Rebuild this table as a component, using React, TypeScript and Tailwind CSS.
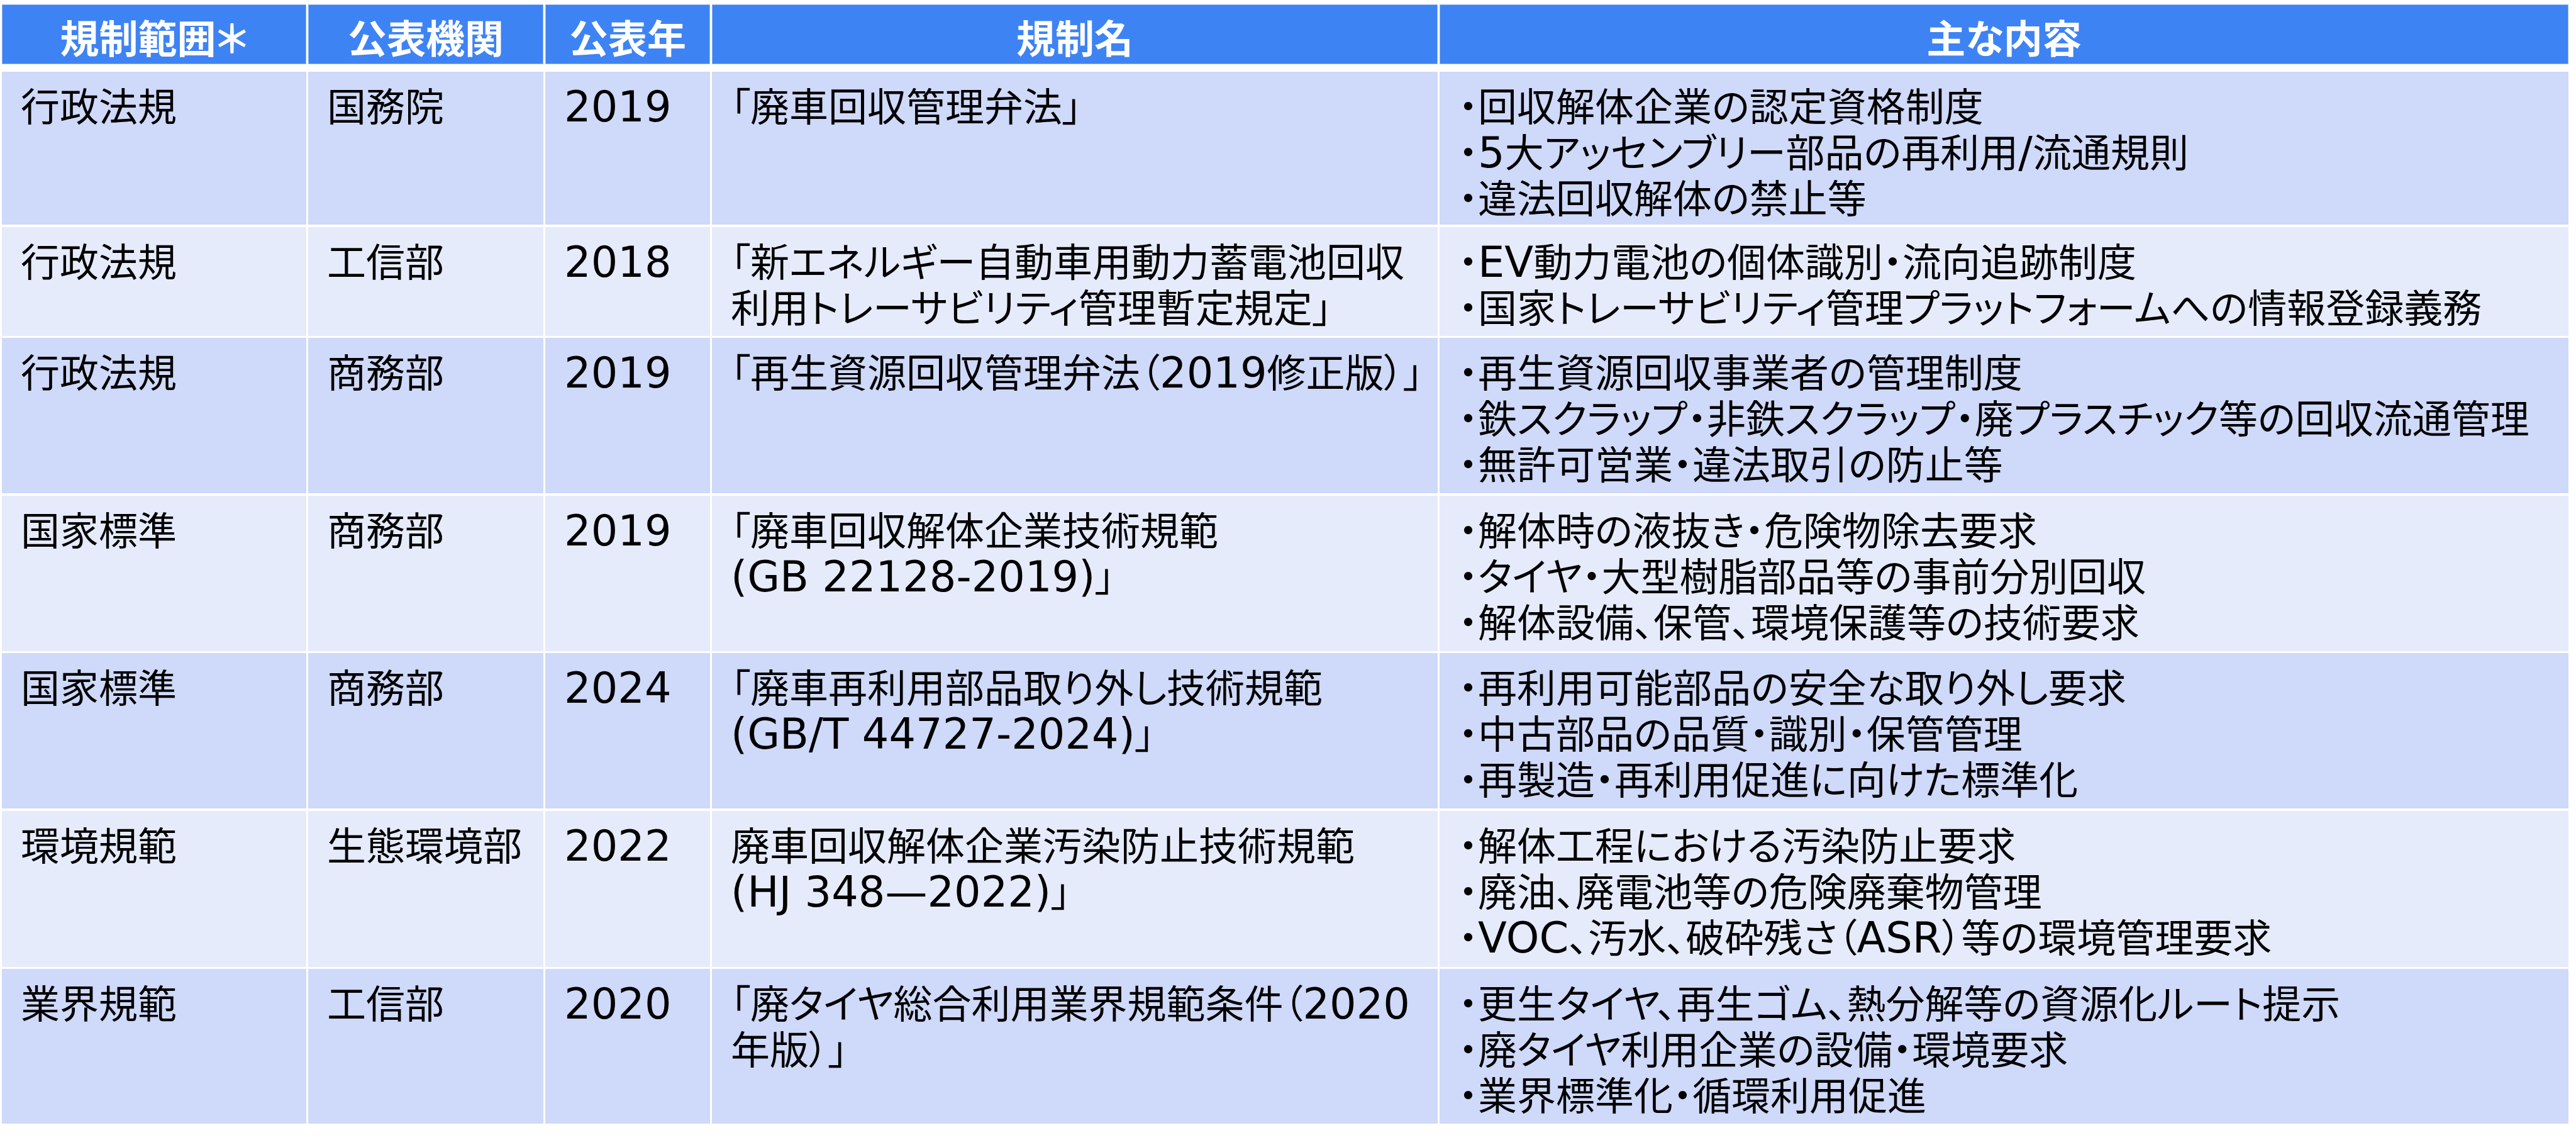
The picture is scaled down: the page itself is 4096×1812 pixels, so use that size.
const rows = [
  {
    scope: "行政法規",
    agency: "国務院",
    year: "2019",
    name: ["「廃車回収管理弁法」"],
    items: ["・回収解体企業の認定資格制度", "・5大アッセンブリー部品の再利用/流通規則", "・違法回収解体の禁止等"],
    h: "h-[243px]",
  },
  {
    scope: "行政法規",
    agency: "工信部",
    year: "2018",
    name: ["「新エネルギー自動車用動力蓄電池回収", "利用トレーサビリティ管理暫定規定」"],
    items: ["・EV動力電池の個体識別・流向追跡制度", "・国家トレーサビリティ管理プラットフォームへの情報登録義務"],
    h: "h-[173px]",
  },
  {
    scope: "行政法規",
    agency: "商務部",
    year: "2019",
    name: ["「再生資源回収管理弁法（2019修正版）」"],
    items: ["・再生資源回収事業者の管理制度", "・鉄スクラップ・非鉄スクラップ・廃プラスチック等の回収流通管理", "・無許可営業・違法取引の防止等"],
    h: "h-[247px]",
  },
  {
    scope: "国家標準",
    agency: "商務部",
    year: "2019",
    name: ["「廃車回収解体企業技術規範", "(GB 22128-2019)」"],
    items: ["・解体時の液抜き・危険物除去要求", "・タイヤ・大型樹脂部品等の事前分別回収", "・解体設備、保管、環境保護等の技術要求"],
    h: "h-[247px]",
  },
  {
    scope: "国家標準",
    agency: "商務部",
    year: "2024",
    name: ["「廃車再利用部品取り外し技術規範", "(GB/T 44727-2024)」"],
    items: ["・再利用可能部品の安全な取り外し要求", "・中古部品の品質・識別・保管管理", "・再製造・再利用促進に向けた標準化"],
    h: "h-[247px]",
  },
  {
    scope: "環境規範",
    agency: "生態環境部",
    year: "2022",
    name: ["廃車回収解体企業汚染防止技術規範", "(HJ 348—2022)」"],
    items: ["・解体工程における汚染防止要求", "・廃油、廃電池等の危険廃棄物管理", "・VOC、汚水、破砕残さ（ASR）等の環境管理要求"],
    h: "h-[248px]",
  },
  {
    scope: "業界規範",
    agency: "工信部",
    year: "2020",
    name: ["「廃タイヤ総合利用業界規範条件（2020", "年版）」"],
    items: ["・更生タイヤ、再生ゴム、熱分解等の資源化ルート提示", "・廃タイヤ利用企業の設備・環境要求", "・業界標準化・循環利用促進"],
    h: "h-[246px]",
  },
];

const cols = "grid grid-cols-[484px_374px_262px_1154px_1795px] gap-x-[3px]";
const headers = ["規制範囲＊", "公表機関", "公表年", "規制名", "主な内容"];

// latin runs (numbers, codes) are set a bit larger/wider than the kanji, like the slide
function Txt({ s }: { s: string }) {
  const parts = s.split(/([\x20-\x7E—]+)/);
  return (
    <>
      {parts.map((p, i) =>
        i % 2 === 1 ? (
          <span key={i} className="font-['DejaVu_Sans',sans-serif] text-[67px] leading-[50px]">
            {p}
          </span>
        ) : (
          <span key={i}>{p}</span>
        )
      )}
    </>
  );
}

export default function App() {
  return (
    <div className="min-h-screen w-full bg-white pt-[7px] pl-[3px] font-['Noto_Sans_CJK_JP','Noto_Sans',sans-serif] text-[62px] leading-[73px] text-black [font-feature-settings:'palt']">
      <div className="flex w-[4081px] flex-col">
        {/* Header */}
        <div className={cols}>
          {headers.map((t) => (
            <div
              key={t}
              className="flex h-[95px] justify-center bg-[#3e83f4] pt-[15px] font-bold text-white outline outline-1 -outline-offset-1 outline-[#8db5f8]"
            >
              {t}
            </div>
          ))}
        </div>

        {/* Body */}
        <div className="mt-[12px] flex flex-col gap-y-[3.5px]">
          {rows.map((r, i) => {
            const bg = i % 2 === 0 ? "bg-[#cfd9f9]" : "bg-[#e6ebfb]";
            const cell = `${bg} ${r.h} pl-[30px] pt-[16px] whitespace-nowrap`;
            return (
              <div key={i} className={cols}>
                <div className={cell}>{r.scope}</div>
                <div className={cell}>{r.agency}</div>
                <div className={cell}>
                  <Txt s={r.year} />
                </div>
                <div className={cell}>
                  {r.name.map((l) => (
                    <div key={l}>
                      <Txt s={l} />
                    </div>
                  ))}
                </div>
                <div className={`${cell} pl-[24px]`}>
                  {r.items.map((l) => (
                    <div key={l}>
                      <Txt s={l} />
                    </div>
                  ))}
                </div>
              </div>
            );
          })}
        </div>
      </div>
    </div>
  );
}
